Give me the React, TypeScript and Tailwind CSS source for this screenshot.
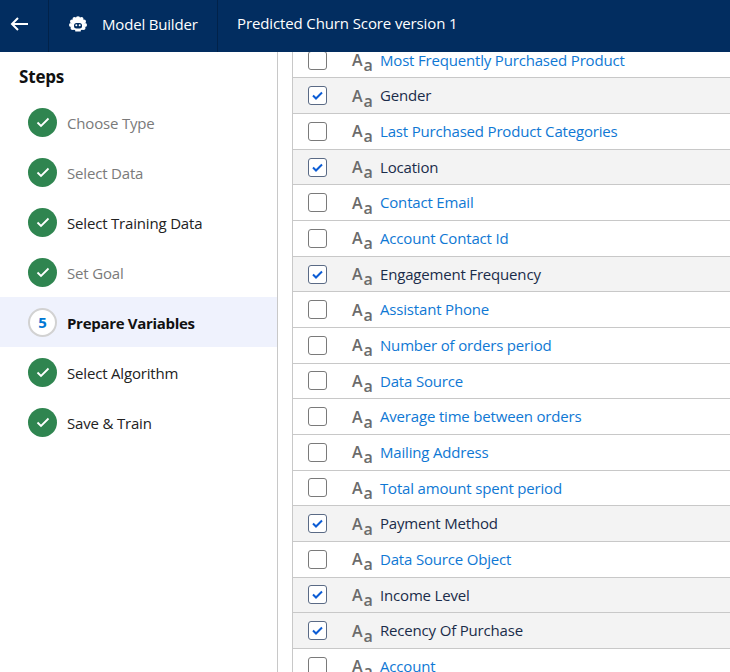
const steps = [
  { n: "Choose Type", muted: true },
  { n: "Select Data", muted: true },
  { n: "Select Training Data" },
  { n: "Set Goal", muted: true },
  { n: "Prepare Variables", active: true },
  { n: "Select Algorithm" },
  { n: "Save & Train" },
];
const rows: [string, boolean][] = [
  ["Most Frequently Purchased Product", false],
  ["Gender", true],
  ["Last Purchased Product Categories", false],
  ["Location", true],
  ["Contact Email", false],
  ["Account Contact Id", false],
  ["Engagement Frequency", true],
  ["Assistant Phone", false],
  ["Number of orders period", false],
  ["Data Source", false],
  ["Average time between orders", false],
  ["Mailing Address", false],
  ["Total amount spent period", false],
  ["Payment Method", true],
  ["Data Source Object", false],
  ["Income Level", true],
  ["Recency Of Purchase", true],
  ["Account", false],
];

function Logo() {
  return (
    <svg width="18" height="16" viewBox="0 0 18 16" fill="white">
      <circle cx="9" cy="2.500" r="2.200" />
      <circle cx="5.500" cy="3" r="2" />
      <circle cx="12.500" cy="3" r="2" />
      <circle cx="3" cy="5.500" r="2" />
      <circle cx="15" cy="5.500" r="2" />
      <circle cx="2" cy="9" r="2" />
      <circle cx="16" cy="9" r="2" />
      <circle cx="3.500" cy="12" r="2" />
      <circle cx="14.500" cy="12" r="2" />
      <rect x="3" y="3" width="12" height="11" rx="3" />
      <rect x="5" y="7" width="8" height="5.500" rx="2.500" fill="#022d60" />
      <circle cx="7.300" cy="9.300" r="1" fill="white" />
      <circle cx="10.700" cy="9.300" r="1" fill="white" />
      <rect x="6" y="14" width="6" height="1.500" rx="0.700" />
    </svg>
  );
}

export default function App() {
  return (
    <div className="h-[672px] w-[730px] overflow-hidden bg-white flex flex-col font-['Open_Sans','Noto_Sans',sans-serif] text-[15px] tracking-[-0.18px]">
      <header className="h-[52px] shrink-0 bg-[#022d60] text-white flex items-stretch">
        <div className="w-[49px] flex items-center pl-[10px] pb-[5px] border-r border-[#01224a]">
          <svg width="18" height="14" viewBox="0 0 18 14" fill="none" stroke="white" strokeWidth="2">
            <path d="M18 7H2M8 1L2 7l6 6" />
          </svg>
        </div>
        <div className="w-[169px] flex items-center pl-[20px] gap-[15px] pb-[4px] border-r border-[#01224a]">
          <Logo />
          <span>Model Builder</span>
        </div>
        <div className="flex items-center pl-[19px] pb-[5px] tracking-[-0.12px]">Predicted Churn Score version 1</div>
      </header>
      <div className="flex-1 flex min-h-0">
        <aside className="w-[278px] shrink-0 border-r border-[#c8c8c8]">
          <h2 className="font-bold text-[17px] text-[#111] pl-[19px] pt-[11px] h-[45px] leading-[28px]">Steps</h2>
          {steps.map((s) => (
            <div key={s.n} className={`h-[50px] flex items-center pl-[28px] gap-[10px] ${s.active ? "bg-[#eff2fd]" : ""}`}>
              {s.active ? (
                <span className="w-[29px] h-[29px] rounded-full bg-white border-2 border-[#d2d2d2] flex items-center justify-center text-[#0078d4] font-bold text-[15px]">5</span>
              ) : (
                <span className="w-[29px] h-[29px] rounded-full bg-[#2f8550] flex items-center justify-center">
                  <svg width="14" height="11" viewBox="0 0 14 11" fill="none" stroke="white" strokeWidth="1.800">
                    <path d="M1.500 5.500l3.500 3.500 7.500-7.500" />
                  </svg>
                </span>
              )}
              <span className={`pt-[2px] ${s.active ? "font-bold text-[#111] tracking-[-0.3px]" : s.muted ? "text-[#7a7a7a]" : "text-[#222]"}`}>{s.n}</span>
            </div>
          ))}
        </aside>
        <main className="flex-1 min-w-0 pl-[14px] overflow-hidden">
          <div className="-mt-[9.27px] border-l border-[#c8c8c8]">
            {rows.map(([label, on]) => (
              <div key={label} className={`h-[35.67px] flex items-center border-b border-[#c8c8c8] ${on ? "bg-[#f3f3f3]" : ""}`}>
                <span className={`ml-[15px] w-[19px] h-[19px] rounded-[3px] border flex items-center justify-center bg-white ${on ? "border-[#5a6a85]" : "border-[#7a7a7a]"}`}>
                  {on && (
                    <svg width="11" height="9" viewBox="0 0 11 9" fill="none" stroke="#0b5cd5" strokeWidth="2">
                      <path d="M1 4.500l3 3 6-6" />
                    </svg>
                  )}
                </span>
                <span className="ml-[25px] w-[28px] text-[#6b6b6b] leading-none flex items-baseline font-semibold tracking-normal">
                  <span className="text-[16px]">A</span>
                  <span className="text-[16px] ml-[1px] relative top-[5px]">a</span>
                </span>
                <span className={on ? "text-[#1a2c4a]" : "text-[#0f78d4]"}>{label}</span>
              </div>
            ))}
          </div>
        </main>
      </div>
    </div>
  );
}
